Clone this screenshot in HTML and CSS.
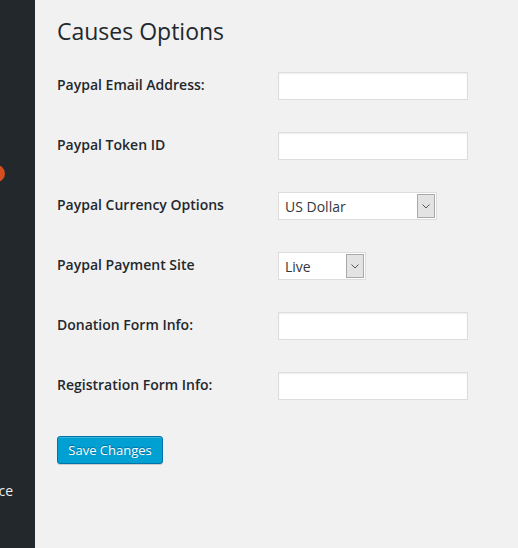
FILE: index.html
```html
<!DOCTYPE html>
<html>
<head>
<meta charset="utf-8">
<link rel="stylesheet" href="styles.css">
</head>
<body>
<div class="layout">
  <nav class="sidebar">
    <span class="badge"></span>
    <div class="menu-item"><span>ce</span></div>
  </nav>
  <main class="main">
    <h1 class="title">Causes Options</h1>
    <form class="options">
      <table class="form-table">
        <tr>
          <th>Paypal Email Address:</th>
          <td><input class="text-input" type="text"></td>
        </tr>
        <tr>
          <th>Paypal Token ID</th>
          <td><input class="text-input" type="text"></td>
        </tr>
        <tr>
          <th>Paypal Currency Options</th>
          <td>
            <span class="select select-wide">
              <select><option>US Dollar</option></select>
              <span class="select-arrow"><svg width="8" height="5" viewBox="0 0 8 5"><path d="M0.5 0.5 L4 4 L7.5 0.5" fill="none" stroke="#555" stroke-width="1"/></svg></span>
            </span>
          </td>
        </tr>
        <tr>
          <th>Paypal Payment Site</th>
          <td>
            <span class="select select-narrow">
              <select><option>Live</option></select>
              <span class="select-arrow"><svg width="8" height="5" viewBox="0 0 8 5"><path d="M0.5 0.5 L4 4 L7.5 0.5" fill="none" stroke="#555" stroke-width="1"/></svg></span>
            </span>
          </td>
        </tr>
        <tr>
          <th>Donation Form Info:</th>
          <td><input class="text-input" type="text"></td>
        </tr>
        <tr>
          <th>Registration Form Info:</th>
          <td><input class="text-input" type="text"></td>
        </tr>
      </table>
      <div class="submit">
        <button type="button" class="button-primary">Save Changes</button>
      </div>
    </form>
  </main>
</div>
</body>
</html>
```
FILE: styles.css
```css
html, body {
  margin: 0;
  padding: 0;
  height: 100%;
  background: #f1f1f1;
  font-family: "Open Sans", "Liberation Sans", sans-serif;
  font-size: 14px;
  color: #23282d;
}
.layout {
  display: flex;
  min-height: 548px;
}
.sidebar {
  width: 35px;
  flex: none;
  background: #23282d;
  overflow: hidden;
  display: flex;
  flex-direction: column;
}
.badge {
  display: block;
  width: 17px;
  height: 17px;
  border-radius: 50%;
  background: #d54e21;
  margin-top: 165px;
  margin-left: -12px;
}
.menu-item {
  margin-top: 291px;
  width: 13px;
  height: 34px;
  display: flex;
  justify-content: flex-end;
  align-items: center;
  color: #eeeeee;
  font-size: 14px;
  white-space: nowrap;
}
.main {
  flex: 1;
  padding-left: 22px;
}
.title {
  margin: 0;
  padding: 15px 0 0 0;
  font-size: 23px;
  line-height: 32px;
  font-weight: 400;
  color: #23282d;
}
.options {
  margin-top: 9px;
}
.form-table {
  border-collapse: collapse;
}
.form-table tr {
  height: 60px;
}
.form-table th {
  box-sizing: border-box;
  width: 221px;
  height: 60px;
  padding: 0 10px 2px 0;
  text-align: left;
  font-weight: 600;
  font-size: 14px;
  line-height: 20px;
  vertical-align: middle;
}
.form-table td {
  padding: 0;
  vertical-align: middle;
}
.text-input {
  display: block;
  box-sizing: border-box;
  width: 190px;
  height: 28px;
  margin: 0;
  border: 1px solid #dddddd;
  background: #ffffff;
  box-shadow: inset 0 1px 2px rgba(0,0,0,0.07);
  font: inherit;
}
.select {
  display: flex;
  box-sizing: border-box;
  height: 28px;
  border: 1px solid #dddddd;
  background: #ffffff;
  align-items: center;
  padding-right: 1px;
}
.select-wide { width: 159px; }
.select-narrow { width: 88px; }
.select select {
  -webkit-appearance: none;
  appearance: none;
  flex: 1;
  min-width: 0;
  border: none;
  background: transparent;
  font-family: "Open Sans", "Liberation Sans", sans-serif;
  font-size: 14px;
  color: #32373c;
  padding: 0 0 0 6px;
  margin: 0;
  height: 24px;
  outline: none;
}
.select-arrow {
  box-sizing: border-box;
  width: 18px;
  height: 24px;
  border: 1px solid #a9a9a9;
  background: #e3e3e3;
  display: flex;
  align-items: center;
  justify-content: center;
}
.submit {
  padding-top: 20px;
}
.button-primary {
  box-sizing: border-box;
  height: 28px;
  padding: 0 10px 1px;
  width: 106px;
  background: #00a0d2;
  border: 1px solid #0073aa;
  border-radius: 3px;
  box-shadow: inset 0 1px 0 rgba(120,200,230,0.5), 0 1px 0 rgba(0,0,0,0.15);
  color: #ffffff;
  font-family: "Open Sans", "Liberation Sans", sans-serif;
  font-size: 13px;
  line-height: 26px;
  text-shadow: 0 -1px 1px #006799;
}
```
